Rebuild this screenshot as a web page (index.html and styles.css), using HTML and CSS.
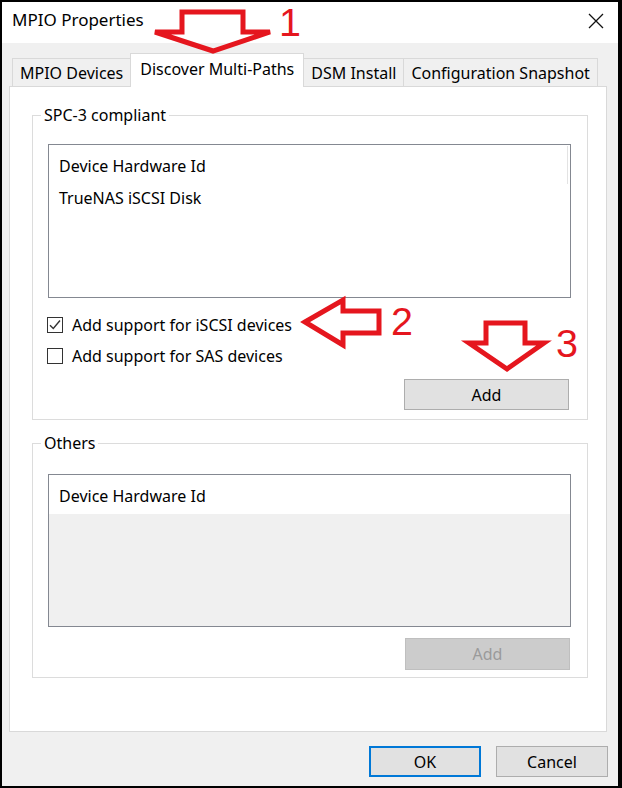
FILE: index.html
```html
<!DOCTYPE html>
<html>
<head>
<meta charset="utf-8">
<title>MPIO Properties</title>
<link rel="stylesheet" href="styles.css">
</head>
<body>
<div class="window">
  <div class="titlebar">
    <span class="title">MPIO Properties</span>
    <svg class="close" width="16" height="16" viewBox="0 0 16 16"><path d="M1 1 L15 15 M15 1 L1 15" stroke="#111" stroke-width="1.3" fill="none"/></svg>
  </div>
  <div class="body">
    <div class="tabs">
      <div class="tab tab-first">MPIO Devices</div>
      <div class="tab tab-active">Discover Multi-Paths</div>
      <div class="tab">DSM Install</div>
      <div class="tab">Configuration Snapshot</div>
    </div>
    <div class="panel">
      <fieldset class="group group-spc">
        <legend>SPC-3 compliant</legend>
        <div class="listview lv-spc">
          <div class="lv-header">Device Hardware Id<span class="lv-sep"></span></div>
          <div class="lv-row">TrueNAS iSCSI Disk</div>
        </div>
        <label class="check check-first"><span class="box"><svg width="14" height="14" viewBox="0 0 14 14"><path d="M2 7.2 L5.3 10.5 L12 2.5" stroke="#333" stroke-width="1.4" fill="none"/></svg></span>Add support for iSCSI devices</label>
        <label class="check"><span class="box"></span>Add support for SAS devices</label>
        <div class="btn-row"><button class="btn btn-add">Add</button></div>
      </fieldset>
      <fieldset class="group group-others">
        <legend>Others</legend>
        <div class="listview lv-others">
          <div class="lv-header">Device Hardware Id</div>
        </div>
        <div class="btn-row btn-row-others"><button class="btn btn-add btn-disabled">Add</button></div>
      </fieldset>
    </div>
    <div class="footer">
      <button class="btn btn-default">OK</button>
      <button class="btn">Cancel</button>
    </div>
  </div>
  <svg class="annotations" width="622" height="788" viewBox="0 0 622 788">
    <g fill="none" stroke="#e5161e" stroke-width="5" stroke-linejoin="miter">
      <path d="M182 12 L243 12 L243 32 L270 32 L213 51 L155 32 L182 32 Z"/>
      <path d="M305 322 L343 300 L343 311 L379 311 L379 333 L343 333 L343 345 Z"/>
      <path d="M486 323 L525 323 L525 343 L544 343 L507 369 L469 343 L486 343 Z"/>
    </g>
    <g class="num" fill="#e5161e" text-anchor="middle">
      <text x="290" y="36">1</text>
      <text x="402" y="335">2</text>
      <text x="567" y="357">3</text>
    </g>
  </svg>
</div>
</body>
</html>
```

FILE: styles.css
```css
* { box-sizing: border-box; }
html, body { margin: 0; padding: 0; }
body {
  width: 622px;
  height: 788px;
  overflow: hidden;
  font-family: "Noto Sans", "Open Sans", sans-serif;
  font-size: 16px;
  color: #000;
}
.window {
  position: relative;
  width: 622px;
  height: 788px;
  border: solid #000;
  border-width: 2px 4px 2px 2px;
  background: #f0f0f0;
  display: flex;
  flex-direction: column;
}
.titlebar {
  height: 41px;
  background: #fff;
  display: flex;
  align-items: center;
  justify-content: space-between;
  padding: 0 14px 6px 10px;
}
.title { font-size: 17px; }
.close { display: block; margin-top: 2px; }
.body {
  flex: 1;
  display: flex;
  flex-direction: column;
  padding: 10px 11px 9px 7px;
}
.tabs {
  display: flex;
  align-items: flex-end;
  padding-left: 3px;
  height: 33px;
  position: relative;
  z-index: 1;
}
.tab {
  height: 28px;
  border: 1px solid #d9d9d9;
  border-bottom: none;
  background: #f0f0f0;
  padding: 0 7px;
  margin-left: -1px;
  display: flex;
  align-items: center;
  white-space: nowrap;
}
.tab-first { margin-left: 0; padding: 0 7px; }
.tab-active {
  height: 34px;
  margin-bottom: -1px;
  background: #fff;
  padding: 0 9px 3px;
}
.panel {
  flex: 1;
  background: #fff;
  border: 1px solid #d9d9d9;
  padding: 18px 18px 0 22px;
}
.group {
  margin: 0;
  padding: 0;
  min-width: 0;
  border: 1px solid #dcdcdc;
}
.group legend {
  margin-left: 8px;
  padding: 0 3px;
  line-height: 20px;
}
.group-others { margin-top: 13px; }
.listview {
  border: 1px solid #848891;
  background: #fff;
  margin: 0 16px 0 15px;
}
.lv-spc { margin-top: 19px; height: 154px; }
.lv-others { margin-top: 21px; height: 153px; background: #f0f0f0; }
.lv-header {
  position: relative;
  height: 39px;
  line-height: 42px;
  padding-left: 10px;
  background: #fff;
}
.lv-sep {
  position: absolute;
  right: 2px;
  top: 1px;
  width: 1px;
  height: 38px;
  background: #e3e3e3;
}
.lv-row {
  height: 28px;
  line-height: 29px;
  padding-left: 10px;
}
.check {
  display: flex;
  align-items: center;
  height: 24px;
  padding-left: 14px;
  margin-top: 7px;
}
.check-first { margin-top: 15px; }
.box {
  width: 16px;
  height: 16px;
  border: 1px solid #333;
  background: #fff;
  margin-right: 9px;
  display: flex;
  align-items: center;
  justify-content: center;
}
.box svg { display: block; }
.btn-row {
  display: flex;
  justify-content: flex-end;
  margin: 11px 18px 9px 0;
}
.btn-row-others { margin: 11px 17px 7px 0; }
.btn {
  font-family: inherit;
  font-size: 16px;
  color: #000;
  background: #e1e1e1;
  border: 1px solid #adadad;
  height: 31px;
  width: 112px;
  padding: 0;
}
.btn-add { width: 165px; }
.btn-disabled {
  background: #cccccc;
  border-color: #bfbfbf;
  color: #9a9a9a;
  height: 32px;
}
.btn-default { border: 2px solid #0078d7; }
.footer {
  display: flex;
  justify-content: flex-end;
  gap: 15px;
  margin-top: 14px;
  margin-right: -1px;
}
.annotations {
  position: absolute;
  left: -2px;
  top: -2px;
  pointer-events: none;
  z-index: 5;
}
.num text {
  font-family: "Liberation Sans", "Noto Sans", sans-serif;
  font-size: 39.5px;
}
```
